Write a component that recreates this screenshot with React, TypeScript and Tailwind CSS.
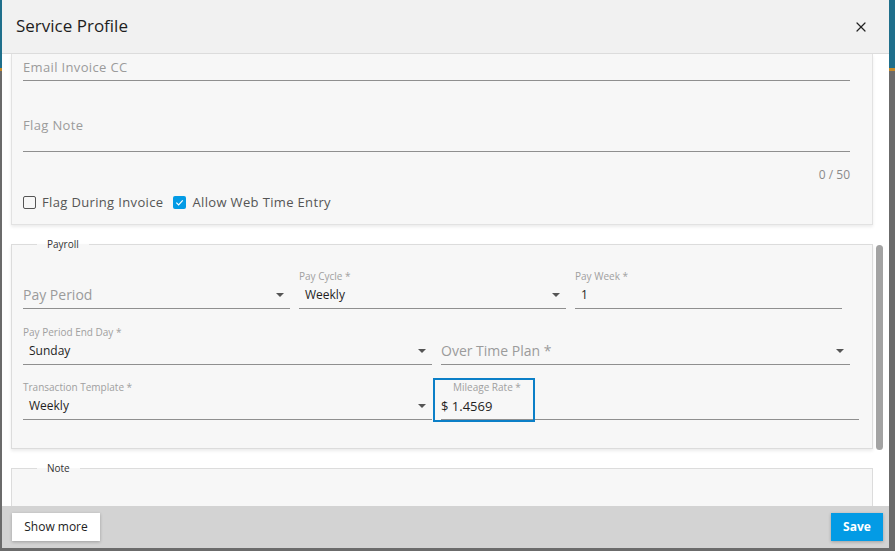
import { X } from "lucide-react";

const font = { fontFamily: '"Open Sans", "Liberation Sans", sans-serif' };

const Arrow = () => (
  <span className="mr-[6px] h-0 w-0 border-x-[4px] border-t-[4px] border-x-transparent border-t-[#555]" />
);

interface FieldProps {
  label?: string;
  value?: string;
  placeholder?: string;
  select?: boolean;
  className?: string;
}

const Field = ({ label, value, placeholder, select, className = "" }: FieldProps) => {
  return (
    <div className={`flex flex-col ${className}`}>
      <div className="h-[14px] text-[10px] leading-[14px] text-[#a0a0a0]">{label}</div>
      <div className="mt-[2px] flex h-[24px] items-start border-b border-[#8f8f8f] pb-[3px]">
        {value ? (
          <span className="flex-1 pl-[6px] text-[12px] font-medium leading-[20px] text-[#1f1f1f]">{value}</span>
        ) : (
          <span className="flex-1 text-[14px] leading-[20px] text-[#9b9b9b]">{placeholder}</span>
        )}
        {select && (
          <span className="flex h-[20px] items-center">
            <Arrow />
          </span>
        )}
      </div>
    </div>
  );
};

const Checkbox = ({ checked, label }: { checked?: boolean; label: string }) => (
  <label className="flex items-center gap-[6px]">
    {checked ? (
      <span className="flex h-[13px] w-[13px] items-center justify-center rounded-[2px] bg-[#039be5]">
        <svg width="9" height="9" viewBox="0 0 10 10" fill="none">
          <path d="M1.5 5.2 4 7.6 8.6 2.6" stroke="white" strokeWidth="1.3" />
        </svg>
      </span>
    ) : (
      <span className="h-[13px] w-[13px] rounded-[2px] border-[1.5px] border-[#555]" />
    )}
    <span className="text-[13px] leading-[20px] tracking-[0.35px] text-[#555]">{label}</span>
  </label>
);

export default function App() {
  return (
    <div
      style={font}
      className="flex h-[551px] w-[895px] overflow-hidden bg-[linear-gradient(to_bottom,#1f6f8b_0,#1f6f8b_68px,#c58a2a_68px,#c58a2a_71px,#6b6b6b_71px)]"
    >
      <div className="mb-[3px] ml-[2px] mr-[6px] flex flex-1 flex-col bg-white">
        {/* header */}
        <div className="flex h-[54px] shrink-0 items-center justify-between border-b border-[#dcdcdc] bg-[#f1f1f1] pl-[14px] pr-[20px]">
          <h2 className="mb-[2px] text-[17px] font-medium text-[#1e1e1e]">Service Profile</h2>
          <X size={16} strokeWidth={1.8} className="text-[#222]" />
        </div>

        {/* body */}
        <div className="flex min-h-0 flex-1">
          <div className="flex-1 overflow-hidden pl-[9px] pr-[3px]">
            <div className="border-x border-b border-[#e2e2e2] bg-[#f7f7f7] px-[11px] pb-[12px] shadow-[0_2px_3px_rgba(0,0,0,0.08)]">
              <div className="mr-[11px] border-b border-[#8f8f8f] pb-[3px] pt-[3px] text-[13px] leading-[20px] tracking-[0.35px] text-[#9b9b9b]">
                Email Invoice CC
              </div>
              <div className="mr-[11px] mt-[34px] h-[37px] border-b border-[#8f8f8f] text-[13px] leading-[20px] tracking-[0.35px] text-[#9b9b9b]">
                Flag Note
              </div>
              <div className="mr-[11px] mt-[13px] text-right text-[12px] leading-[20px] text-[#8a8a8a]">0 / 50</div>
              <div className="mt-[7px] flex gap-[10px]">
                <Checkbox label="Flag During Invoice" />
                <Checkbox checked label="Allow Web Time Entry" />
              </div>
            </div>

            <fieldset className="mt-[12px] border border-[#dcdcdc] bg-[#f7f7f7] px-[11px] pb-[28px] pt-[18px] shadow-[0_2px_3px_rgba(0,0,0,0.08)]">
              <legend className="ml-[14px] px-[10px] text-[10px] font-medium leading-[14px] text-[#333]">Payroll</legend>
              <div className="mr-[19px] grid grid-cols-3 gap-x-[9px]">
                <Field placeholder="Pay Period" select />
                <Field label="Pay Cycle *" value="Weekly" select />
                <Field label="Pay Week *" value="1" />
              </div>
              <div className="mr-[11px] mt-[16px] grid grid-cols-2 gap-x-[9px]">
                <Field label="Pay Period End Day *" value="Sunday" select />
                <Field placeholder="Over Time Plan *" select />
              </div>
              <div className="mr-[2px] mt-[15px] grid grid-cols-[409px_1fr] gap-x-[9px]">
                <Field label="Transaction Template *" value="Weekly" select />
                <div className="relative flex flex-col">
                  <div className="h-[14px] pl-[12px] text-[10px] leading-[14px] text-[#a0a0a0]">Mileage Rate *</div>
                  <div className="mt-[2px] h-[24px] border-b border-[#8f8f8f] pb-[3px] text-[13px] leading-[20px] text-[#1f1f1f]">
                    $ 1.4569
                  </div>
                  <span className="absolute left-[-8px] top-[-2px] h-[44px] w-[102px] border-2 border-[#0b7fc7]" />
                </div>
              </div>
            </fieldset>

            <fieldset className="mt-[12px] h-[80px] border border-[#dcdcdc] bg-[#f7f7f7] px-[11px]">
              <legend className="ml-[14px] px-[10px] text-[10px] font-medium leading-[14px] text-[#333]">Note</legend>
            </fieldset>
          </div>
          {/* scrollbar */}
          <div className="w-[13px] shrink-0 pr-[6px]">
            <div className="mt-[191px] h-[205px] w-[7px] rounded-full bg-[#a3a3a3]" />
          </div>
        </div>

        {/* footer */}
        <div className="flex h-[42px] shrink-0 items-center justify-between bg-[#d3d3d3] pl-[10px] pr-[6px]">
          <button className="h-[28px] w-[88px] bg-white text-[12px] text-[#222] shadow-[0_1px_3px_rgba(0,0,0,0.25)]">
            Show more
          </button>
          <button className="h-[28px] w-[52px] bg-[#039be5] text-[12px] font-bold text-white shadow-[0_1px_3px_rgba(0,0,0,0.25)]">
            Save
          </button>
        </div>
      </div>
    </div>
  );
}
